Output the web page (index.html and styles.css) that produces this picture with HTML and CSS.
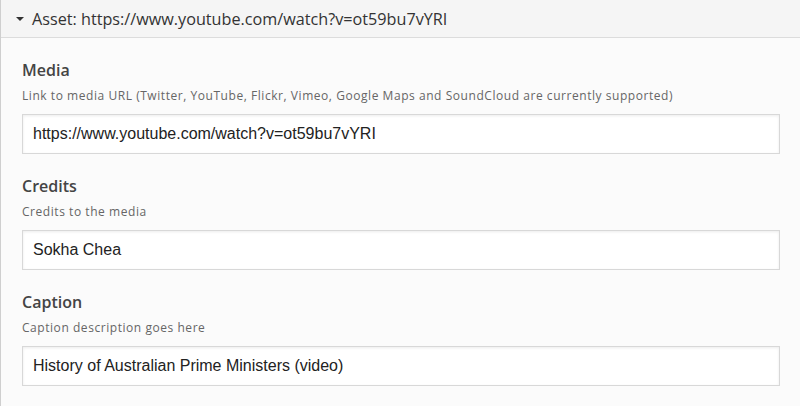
FILE: index.html
```html
<!DOCTYPE html>
<html>
<head>
<meta charset="utf-8">
<link rel="stylesheet" href="styles.css">
</head>
<body>
<div class="panel">
  <div class="panel-header">
    <span class="caret"></span>
    <span class="panel-title">Asset: https://www.youtube.com/watch?v=ot59bu7vYRI</span>
  </div>
  <div class="panel-body">
    <div class="field">
      <div class="field-label">Media</div>
      <div class="field-help">Link to media URL (Twitter, YouTube, Flickr, Vimeo, Google Maps and SoundCloud are currently supported)</div>
      <div class="field-input">https://www.youtube.com/watch?v=ot59bu7vYRI</div>
    </div>
    <div class="field">
      <div class="field-label">Credits</div>
      <div class="field-help">Credits to the media</div>
      <div class="field-input">Sokha Chea</div>
    </div>
    <div class="field">
      <div class="field-label">Caption</div>
      <div class="field-help">Caption description goes here</div>
      <div class="field-input">History of Australian Prime Ministers (video)</div>
    </div>
  </div>
</div>
</body>
</html>
```
FILE: styles.css
```css
html, body {
  margin: 0;
  padding: 0;
  background: #fbfbfb;
}
.panel {
  border-left: 1px solid #cfcfcf;
  min-height: 406px;
  box-sizing: border-box;
  font-family: "Open Sans", sans-serif;
}
.panel-header {
  height: 37px;
  background: #f5f5f5;
  border-bottom: 1px solid #dcdcdc;
  display: flex;
  align-items: center;
  padding-left: 15px;
  box-sizing: content-box;
}
.caret {
  width: 0;
  height: 0;
  border-left: 4px solid transparent;
  border-right: 4px solid transparent;
  border-top: 4px solid #333;
  margin-right: 8px;
}
.panel-title {
  font-size: 16.2px;
  color: #333;
}
.panel-body {
  padding: 21px 20px 0 21px;
}
.field {
  margin-bottom: 21px;
}
.field-label {
  font-size: 16px;
  font-weight: 600;
  color: #444;
  line-height: 22px;
}
.field-help {
  font-size: 12px;
  color: #666;
  letter-spacing: 0.55px;
  line-height: 16px;
  margin-top: 7px;
  margin-bottom: 10px;
}
.field-input {
  height: 38px;
  background: #fff;
  border: 1px solid #d8d8d8;
  box-shadow: inset 0 1px 3px rgba(0,0,0,0.08);
  font-family: "Liberation Sans", Arial, sans-serif;
  font-size: 16px;
  color: #222;
  display: flex;
  align-items: center;
  padding-left: 10px;
}
```
